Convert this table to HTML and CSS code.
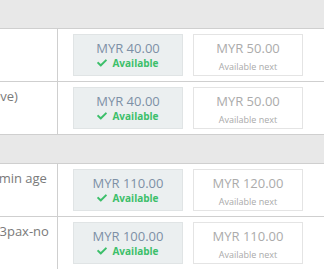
FILE: index.html
```html
<!DOCTYPE html>
<html>
<head>
<meta charset="utf-8">
<link rel="stylesheet" href="styles.css">
</head>
<body>
<div class="table">
  <div class="section"></div>
  <div class="row">
    <div class="label">Adult (12 years &amp; above)</div>
    <div class="prices">
      <div class="price current">
        <div class="amount">MYR 40.00</div>
        <div class="status"><svg class="check" viewBox="0 0 512 512" width="10" height="10"><path d="M173.898 439.404l-166.4-166.4c-9.997-9.997-9.997-26.206 0-36.204l36.203-36.204c9.997-9.998 26.207-9.998 36.204 0L192 312.69 432.095 72.596c9.997-9.997 26.207-9.997 36.204 0l36.203 36.204c9.997 9.997 9.997 26.206 0 36.204l-294.4 294.401c-9.998 9.997-26.207 9.997-36.204-.001z"/></svg><span>Available</span></div>
      </div>
      <div class="price next">
        <div class="amount">MYR 50.00</div>
        <div class="note">Available next</div>
      </div>
    </div>
  </div>
  <div class="row">
    <div class="label">Senior citizen (60 years &amp; above)</div>
    <div class="prices">
      <div class="price current">
        <div class="amount">MYR 40.00</div>
        <div class="status"><svg class="check" viewBox="0 0 512 512" width="10" height="10"><path d="M173.898 439.404l-166.4-166.4c-9.997-9.997-9.997-26.206 0-36.204l36.203-36.204c9.997-9.998 26.207-9.998 36.204 0L192 312.69 432.095 72.596c9.997-9.997 26.207-9.997 36.204 0l36.203 36.204c9.997 9.997 9.997 26.206 0 36.204l-294.4 294.401c-9.998 9.997-26.207 9.997-36.204-.001z"/></svg><span>Available</span></div>
      </div>
      <div class="price next">
        <div class="amount">MYR 50.00</div>
        <div class="note">Available next</div>
      </div>
    </div>
  </div>
  <div class="section"></div>
  <div class="row">
    <div class="label">Child (3 - 11 years old) with a min age</div>
    <div class="prices">
      <div class="price current">
        <div class="amount">MYR 110.00</div>
        <div class="status"><svg class="check" viewBox="0 0 512 512" width="10" height="10"><path d="M173.898 439.404l-166.4-166.4c-9.997-9.997-9.997-26.206 0-36.204l36.203-36.204c9.997-9.998 26.207-9.998 36.204 0L192 312.69 432.095 72.596c9.997-9.997 26.207-9.997 36.204 0l36.203 36.204c9.997 9.997 9.997 26.206 0 36.204l-294.4 294.401c-9.998 9.997-26.207 9.997-36.204-.001z"/></svg><span>Available</span></div>
      </div>
      <div class="price next">
        <div class="amount">MYR 120.00</div>
        <div class="note">Available next</div>
      </div>
    </div>
  </div>
  <div class="row">
    <div class="label">Family packages for 2 adults, 3pax-no</div>
    <div class="prices">
      <div class="price current">
        <div class="amount">MYR 100.00</div>
        <div class="status"><svg class="check" viewBox="0 0 512 512" width="10" height="10"><path d="M173.898 439.404l-166.4-166.4c-9.997-9.997-9.997-26.206 0-36.204l36.203-36.204c9.997-9.998 26.207-9.998 36.204 0L192 312.69 432.095 72.596c9.997-9.997 26.207-9.997 36.204 0l36.203 36.204c9.997 9.997 9.997 26.206 0 36.204l-294.4 294.401c-9.998 9.997-26.207 9.997-36.204-.001z"/></svg><span>Available</span></div>
      </div>
      <div class="price next">
        <div class="amount">MYR 110.00</div>
        <div class="note">Available next</div>
      </div>
    </div>
  </div>
</div>
</body>
</html>
```
FILE: styles.css
```css
html, body {
  margin: 0;
  padding: 0;
  background: #fff;
  overflow: hidden;
}
body {
  font-family: "Open Sans", "DejaVu Sans", sans-serif;
}
.table {
  margin-left: -200px;
  width: 600px;
}
.section {
  height: 28px;
  background: #e8e8e8;
  border-bottom: 1px solid #cfcfcf;
}
.row {
  display: grid;
  grid-template-columns: 258px 1fr;
  border-bottom: 1px solid #cfcfcf;
}
.label {
  border-right: 1px solid #cfcfcf;
  padding: 5px 8px 5px 22px;
  font-size: 13px;
  line-height: 18px;
  color: #7a7a7a;
  white-space: nowrap;
  overflow: hidden;
}
.prices {
  display: flex;
  gap: 10px;
  padding: 5px 15px;
}
.price {
  width: 110px;
  height: 42px;
  box-sizing: border-box;
  border: 1px solid;
  text-align: center;
  padding-top: 5px;
}
.current {
  background: #ebeff0;
  border-color: #e0e4e5;
}
.next {
  background: #fff;
  border-color: #e4e4e4;
}
.amount {
  font-size: 13px;
  line-height: 16px;
}
.current .amount {
  color: #7d90a6;
}
.next .amount {
  color: #ababab;
}
.status {
  display: flex;
  justify-content: center;
  align-items: center;
  gap: 5px;
  font-size: 10px;
  font-weight: 700;
  line-height: 14px;
  color: #3cbf6a;
}
.check {
  fill: #3cbf6a;
}
.note {
  font-size: 9px;
  line-height: 22px;
  color: #aaaaaa;
}
```
